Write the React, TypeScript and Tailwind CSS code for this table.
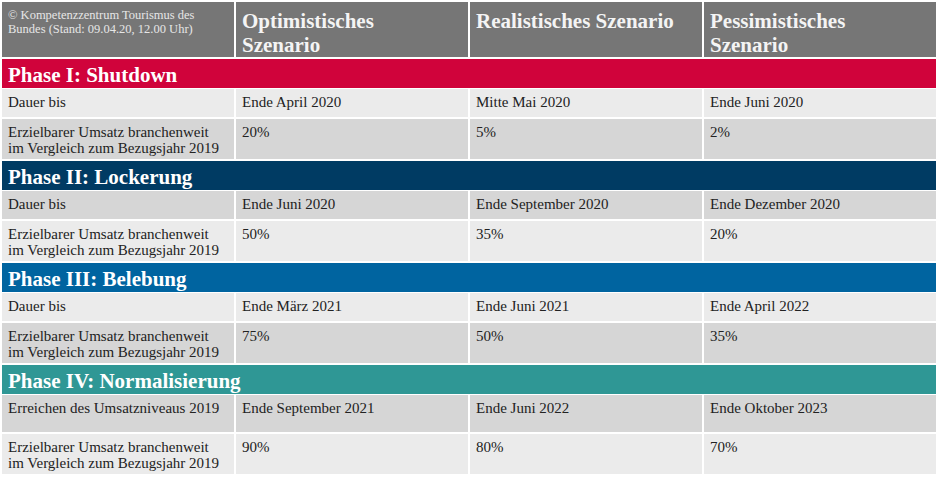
const phases = [
  {
    title: 'Phase I: Shutdown',
    bar: 'bg-[#d0033b]',
    rows: [
      { label: 'Dauer bis', values: ['Ende April 2020', 'Mitte Mai 2020', 'Ende Juni 2020'], h: 'h-[28px]', dark: false },
      {
        label: 'Erzielbarer Umsatz branchenweit im Vergleich zum Bezugsjahr 2019',
        values: ['20%', '5%', '2%'],
        h: 'h-[40px]',
        dark: true,
      },
    ],
  },
  {
    title: 'Phase II: Lockerung',
    bar: 'bg-[#003b63]',
    rows: [
      { label: 'Dauer bis', values: ['Ende Juni 2020', 'Ende September 2020', 'Ende Dezember 2020'], h: 'h-[28px]', dark: true },
      {
        label: 'Erzielbarer Umsatz branchenweit im Vergleich zum Bezugsjahr 2019',
        values: ['50%', '35%', '20%'],
        h: 'h-[40px]',
        dark: false,
      },
    ],
  },
  {
    title: 'Phase III: Belebung',
    bar: 'bg-[#0064a0]',
    rows: [
      { label: 'Dauer bis', values: ['Ende März 2021', 'Ende Juni 2021', 'Ende April 2022'], h: 'h-[28px]', dark: false },
      {
        label: 'Erzielbarer Umsatz branchenweit im Vergleich zum Bezugsjahr 2019',
        values: ['75%', '50%', '35%'],
        h: 'h-[40px]',
        dark: true,
      },
    ],
  },
  {
    title: 'Phase IV: Normalisierung',
    bar: 'bg-[#2f9795]',
    rows: [
      {
        label: 'Erreichen des Umsatzniveaus 2019',
        values: ['Ende September 2021', 'Ende Juni 2022', 'Ende Oktober 2023'],
        h: 'h-[37px]',
        dark: true,
      },
      {
        label: 'Erzielbarer Umsatz branchenweit im Vergleich zum Bezugsjahr 2019',
        values: ['90%', '80%', '70%'],
        h: 'h-[40px]',
        dark: false,
      },
    ],
  },
];

function Row({ label, values, h, dark }: { label: string; values: string[]; h: string; dark: boolean }) {
  const bg = dark ? 'bg-[#d6d6d6]' : 'bg-[#ebebeb]';
  return (
    <div className={`flex gap-[2px] ${h}`}>
      <div className={`w-[232px] ${bg} pl-[6px] pr-[10px] pt-[5px] leading-[16px]`}>{label}</div>
      {values.map((v) => (
        <div key={v} className={`w-[232px] ${bg} pl-[6px] pt-[5px] leading-[16px]`}>
          {v}
        </div>
      ))}
    </div>
  );
}

export default function App() {
  return (
    <div className="w-[940px] h-[480px] bg-white pt-[2px] pl-[2px] font-['Liberation_Serif',serif] text-[15px] text-[#222]">
      <div className="flex flex-col gap-[2px]">
        {/* header */}
        <div className="flex gap-[2px] h-[55px]">
          <div className="w-[232px] bg-[#767676] pl-[6px] pt-[6px] text-[12.5px] leading-[14px] text-[#e6e6e6]">
            © Kompetenzzentrum Tourismus des Bundes (Stand: 09.04.20, 12.00 Uhr)
          </div>
          <div className="w-[232px] bg-[#767676] pl-[6px] pt-[7px] text-[21px] font-bold leading-[24px] text-[#f4f4f4]">
            Optimistisches
            <br />
            Szenario
          </div>
          <div className="w-[232px] bg-[#767676] pl-[6px] pt-[7px] text-[21px] font-bold leading-[24px] text-[#f4f4f4]">
            Realistisches Szenario
          </div>
          <div className="w-[232px] bg-[#767676] pl-[6px] pt-[7px] text-[21px] font-bold leading-[24px] text-[#f4f4f4]">
            Pessimistisches
            <br />
            Szenario
          </div>
        </div>

        {phases.map((p) => (
          <div key={p.title} className="flex flex-col">
            <div className={`w-[934px] h-[29px] ${p.bar} flex items-center pl-[6px] pt-[4px] text-[21px] font-bold text-white`}>
              {p.title}
            </div>
            <div className="mt-[1px] flex flex-col gap-[2px]">
              {p.rows.map((r) => (
                <Row key={r.label} label={r.label} values={r.values} h={r.h} dark={r.dark} />
              ))}
            </div>
          </div>
        ))}
      </div>
    </div>
  );
}
